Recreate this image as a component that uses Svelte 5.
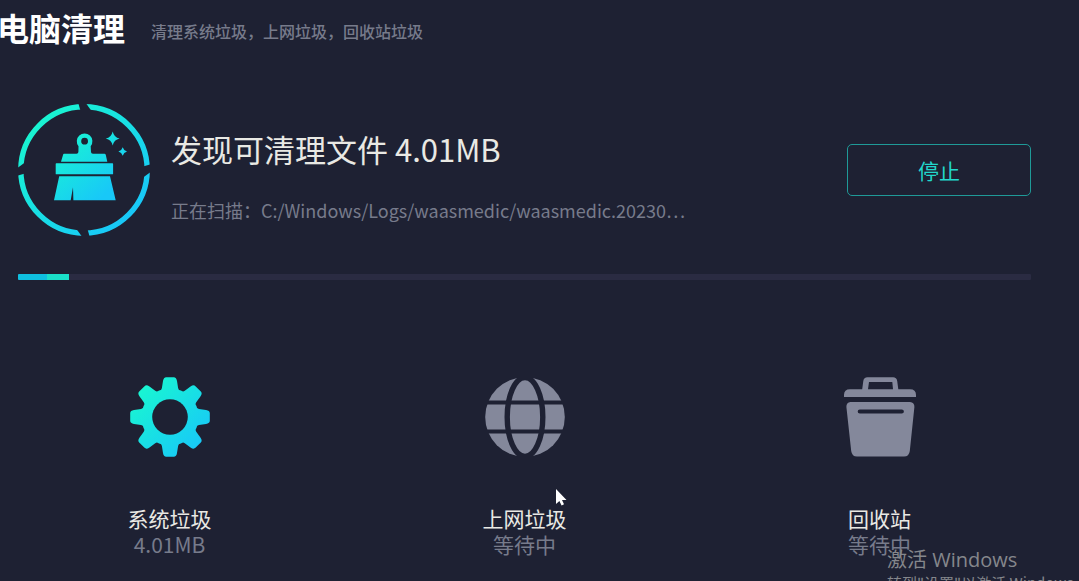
<script>
    let scanning = $state(true);

    const found = '4.01MB';
    const currentPath = 'C:/Windows/Logs/waasmedic/waasmedic.20230…';
    const progress = 5;

    const categories = [
        { icon: 'gear', name: '系统垃圾', status: found },
        { icon: 'globe', name: '上网垃圾', status: '等待中' },
        { icon: 'bin', name: '回收站', status: '等待中' }
    ];

    const quarters = [0, 90, 180, 270];
    const teeth = [0, 45, 90, 135, 180, 225, 270, 315];
</script>

<main>
    <header>
        <h1>电脑清理</h1>
        <p>清理系统垃圾，上网垃圾，回收站垃圾</p>
    </header>

    <section class="scan">
        <svg class="brush" viewBox="0 0 132 132" aria-hidden="true">
            <defs>
                <linearGradient id="ring-fill" gradientUnits="userSpaceOnUse" x1="20" y1="20" x2="112" y2="112">
                    <stop offset="0" stop-color="#19f4d2" />
                    <stop offset="1" stop-color="#18c8f8" />
                </linearGradient>
                <linearGradient id="brush-fill" gradientUnits="userSpaceOnUse" x1="46" y1="40" x2="88" y2="90">
                    <stop offset="0" stop-color="#19f0d6" />
                    <stop offset="1" stop-color="#18c8f8" />
                </linearGradient>
                <mask id="ring-cuts" maskUnits="userSpaceOnUse" x="0" y="0" width="132" height="132">
                    <rect width="132" height="132" fill="#fff" />
                    {#each quarters as angle}
                        <path d="M60.3-1L62.5 7H73.5L67.8-1Z" transform="rotate({angle} 66 66)" />
                    {/each}
                </mask>
            </defs>
            <circle cx="66" cy="66" r="63.2" fill="none" stroke="url(#ring-fill)" stroke-width="5.4" mask="url(#ring-cuts)" />
            <g fill="url(#brush-fill)">
                <path fill-rule="evenodd" d="M46 49.8H58.5Q60.3 49.8 60.4 48L60.5 42.2A7.8 7.8 0 1 1 72.7 42.2L73 48Q73 49.8 75 49.8H86.5Q87.5 49.8 87.8 51L89.3 57.8H43L45 51Q45.3 49.8 46 49.8ZM66.6 33.8A3.4 3.4 0 1 0 66.6 40.6A3.4 3.4 0 1 0 66.6 33.8Z" />
                <rect x="37.7" y="59.3" width="57.4" height="11" rx="0.6" />
                <path d="M41.2 72.2H92L97.7 96.2H55.4L55 83.2L52.7 96.2H36Z" />
                <path d="M94.7 27.5Q96 33.4 101.6 34.5Q96 35.7 94.7 41.5Q93.4 35.7 87.8 34.5Q93.4 33.4 94.7 27.5Z" />
                <path d="M104.7 43.2Q105.7 46.6 109 47.5Q105.7 48.5 104.7 51.8Q103.7 48.5 100.4 47.5Q103.7 46.6 104.7 43.2Z" />
            </g>
        </svg>
        <div class="info">
            <h2>发现可清理文件 {found}</h2>
            <p>正在扫描：<span>{currentPath}</span></p>
        </div>
        <button onclick={() => (scanning = !scanning)}>{scanning ? '停止' : '继续'}</button>
    </section>

    <div class="track" role="progressbar" aria-label="扫描进度" aria-valuenow={progress} aria-valuemin="0" aria-valuemax="100">
        <div class="bar" style="width: {progress}%"></div>
    </div>

    <ul class="categories">
        {#each categories as category}
            <li>
                {#if category.icon === 'gear'}
                    <svg viewBox="0 0 80 80" aria-hidden="true">
                        <defs>
                            <linearGradient id="gear-fill" x1="0.1" y1="0.1" x2="0.88" y2="0.88">
                                <stop offset="0" stop-color="#19f8d0" />
                                <stop offset="1" stop-color="#18c8f8" />
                            </linearGradient>
                            <mask id="gear-shape" maskUnits="userSpaceOnUse" x="0" y="0" width="80" height="80">
                                <g fill="#fff">
                                    <circle cx="40" cy="40" r="28.6" />
                                    {#each teeth as angle}
                                        <path d="M29.3 15.2Q31.2 14 31.9 11L33 4Q33.6 0.2 36.2 0.2H43.8Q46.4 0.2 47 4L48.1 11Q48.8 14 50.7 15.2V24H29.3Z" transform="rotate({angle} 40 40)" />
                                    {/each}
                                </g>
                                <circle cx="40" cy="40" r="17.8" />
                            </mask>
                        </defs>
                        <rect width="80" height="80" fill="url(#gear-fill)" mask="url(#gear-shape)" />
                    </svg>
                {:else if category.icon === 'globe'}
                    <svg viewBox="0 0 80 80" aria-hidden="true">
                        <mask id="globe-lines" maskUnits="userSpaceOnUse" x="0" y="0" width="80" height="80">
                            <rect width="80" height="80" fill="#fff" />
                            <g fill="none" stroke="#000">
                                <ellipse cx="40" cy="40" rx="17.8" ry="39.5" stroke-width="5.4" />
                                <path d="M0 25.5H80M0 54.5H80" stroke-width="4.2" />
                            </g>
                        </mask>
                        <circle cx="40" cy="40" r="39.8" fill="#84889b" mask="url(#globe-lines)" />
                    </svg>
                {:else}
                    <svg viewBox="0 0 80 80" fill="#84889b" aria-hidden="true">
                        <path fill-rule="evenodd" d="M4 20V18Q4 12.3 10 12.3H22.2L23.3 4Q23.9 0.3 27.5 0.3H53Q56.6 0.3 57.2 4L58.3 12.3H70Q76 12.3 76 18V20ZM29 5L28 12.3H53L52.3 5Z" />
                        <path fill-rule="evenodd" d="M10.5 25H70Q74.6 25.3 74.4 30L69.8 74Q69 79.6 64 79.6H17Q12 79.6 11.2 74L6.4 30Q6.2 25.3 10.5 25ZM19.8 32.4A2 2 0 0 0 19.8 36.6H61.8A2 2 0 0 0 61.8 32.4Z" />
                    </svg>
                {/if}
                <h3>{category.name}</h3>
                <p>{category.status}</p>
            </li>
        {/each}
    </ul>

    <aside class="watermark">
        <p>激活 Windows</p>
        <small>转到"设置"以激活 Windows。</small>
    </aside>

    <svg class="pointer" viewBox="0 0 12 18" aria-hidden="true">
        <path d="M1 1V16L4.4 12.9L6.6 17.4L9 16.3L7 12H11.5Z" fill="#fff" />
    </svg>
</main>

<style>
:global(body) {
    background: #1e2133;
}

main {
    position: relative;
    box-sizing: border-box;
    height: 100vh;
    padding: 4px 48px 0 18px;
    overflow: hidden;
    font-family: "Noto Sans CJK SC", sans-serif;
    color: #e9e9e4;
}

h1, h2, h3, p, ul {
    margin: 0;
    padding: 0;
    font-weight: 400;
}

header {
    display: flex;
    align-items: center;
    gap: 26px;
    margin-left: -21px;
}

h1 {
    font-size: 32px;
    line-height: 46px;
    font-weight: 700;
    color: #fff;
}

header p {
    padding-top: 8px;
    font-size: 16px;
    line-height: 24px;
    font-weight: 500;
    color: #777b8b;
}

.scan {
    display: flex;
    align-items: center;
    gap: 21px;
    margin-top: 54px;
}

.brush {
    flex: none;
    width: 132px;
    height: 132px;
}

.info {
    flex: 1;
    min-width: 0;
    padding-top: 10px;
}

h2 {
    font-size: 31px;
    line-height: 48px;
}

.info p {
    margin-top: 22px;
    font-size: 18px;
    line-height: 30px;
    color: #777b8b;
    white-space: nowrap;
    overflow: hidden;
    text-overflow: ellipsis;
}

button {
    width: 184px;
    height: 52px;
    padding: 0;
    border: 1px solid #1f9a98;
    border-radius: 5px;
    background: transparent;
    font-family: inherit;
    font-size: 21px;
    color: #22d8cc;
    cursor: pointer;
}

.track {
    height: 6px;
    margin-top: 38px;
    border-radius: 1px;
    background: #2a2b42;
    overflow: hidden;
}

.bar {
    height: 100%;
    background: linear-gradient(90deg, #0fbfdf 56%, #1adfc8 56%);
}

.categories {
    display: grid;
    grid-template-columns: repeat(3, 1fr);
    column-gap: 52px;
    margin-top: 97px;
    list-style: none;
    text-align: center;
}

.categories svg {
    display: block;
    width: 80px;
    height: 80px;
    margin: 0 auto 48px;
}

h3, .categories p {
    font-size: 21px;
    line-height: 26px;
}

.categories p {
    color: #777b8b;
}

.watermark {
    position: absolute;
    left: 887px;
    top: 545px;
    color: #85878c;
    font-family: "Open Sans", "Noto Sans CJK SC", sans-serif;
    white-space: nowrap;
}

.watermark p {
    font-size: 20px;
    line-height: 30px;
}

.watermark small {
    display: block;
    font-family: "Noto Sans CJK SC", sans-serif;
    font-size: 15px;
    line-height: 16px;
}

.pointer {
    position: absolute;
    left: 555px;
    top: 488px;
    width: 12px;
    height: 18px;
}
</style>
